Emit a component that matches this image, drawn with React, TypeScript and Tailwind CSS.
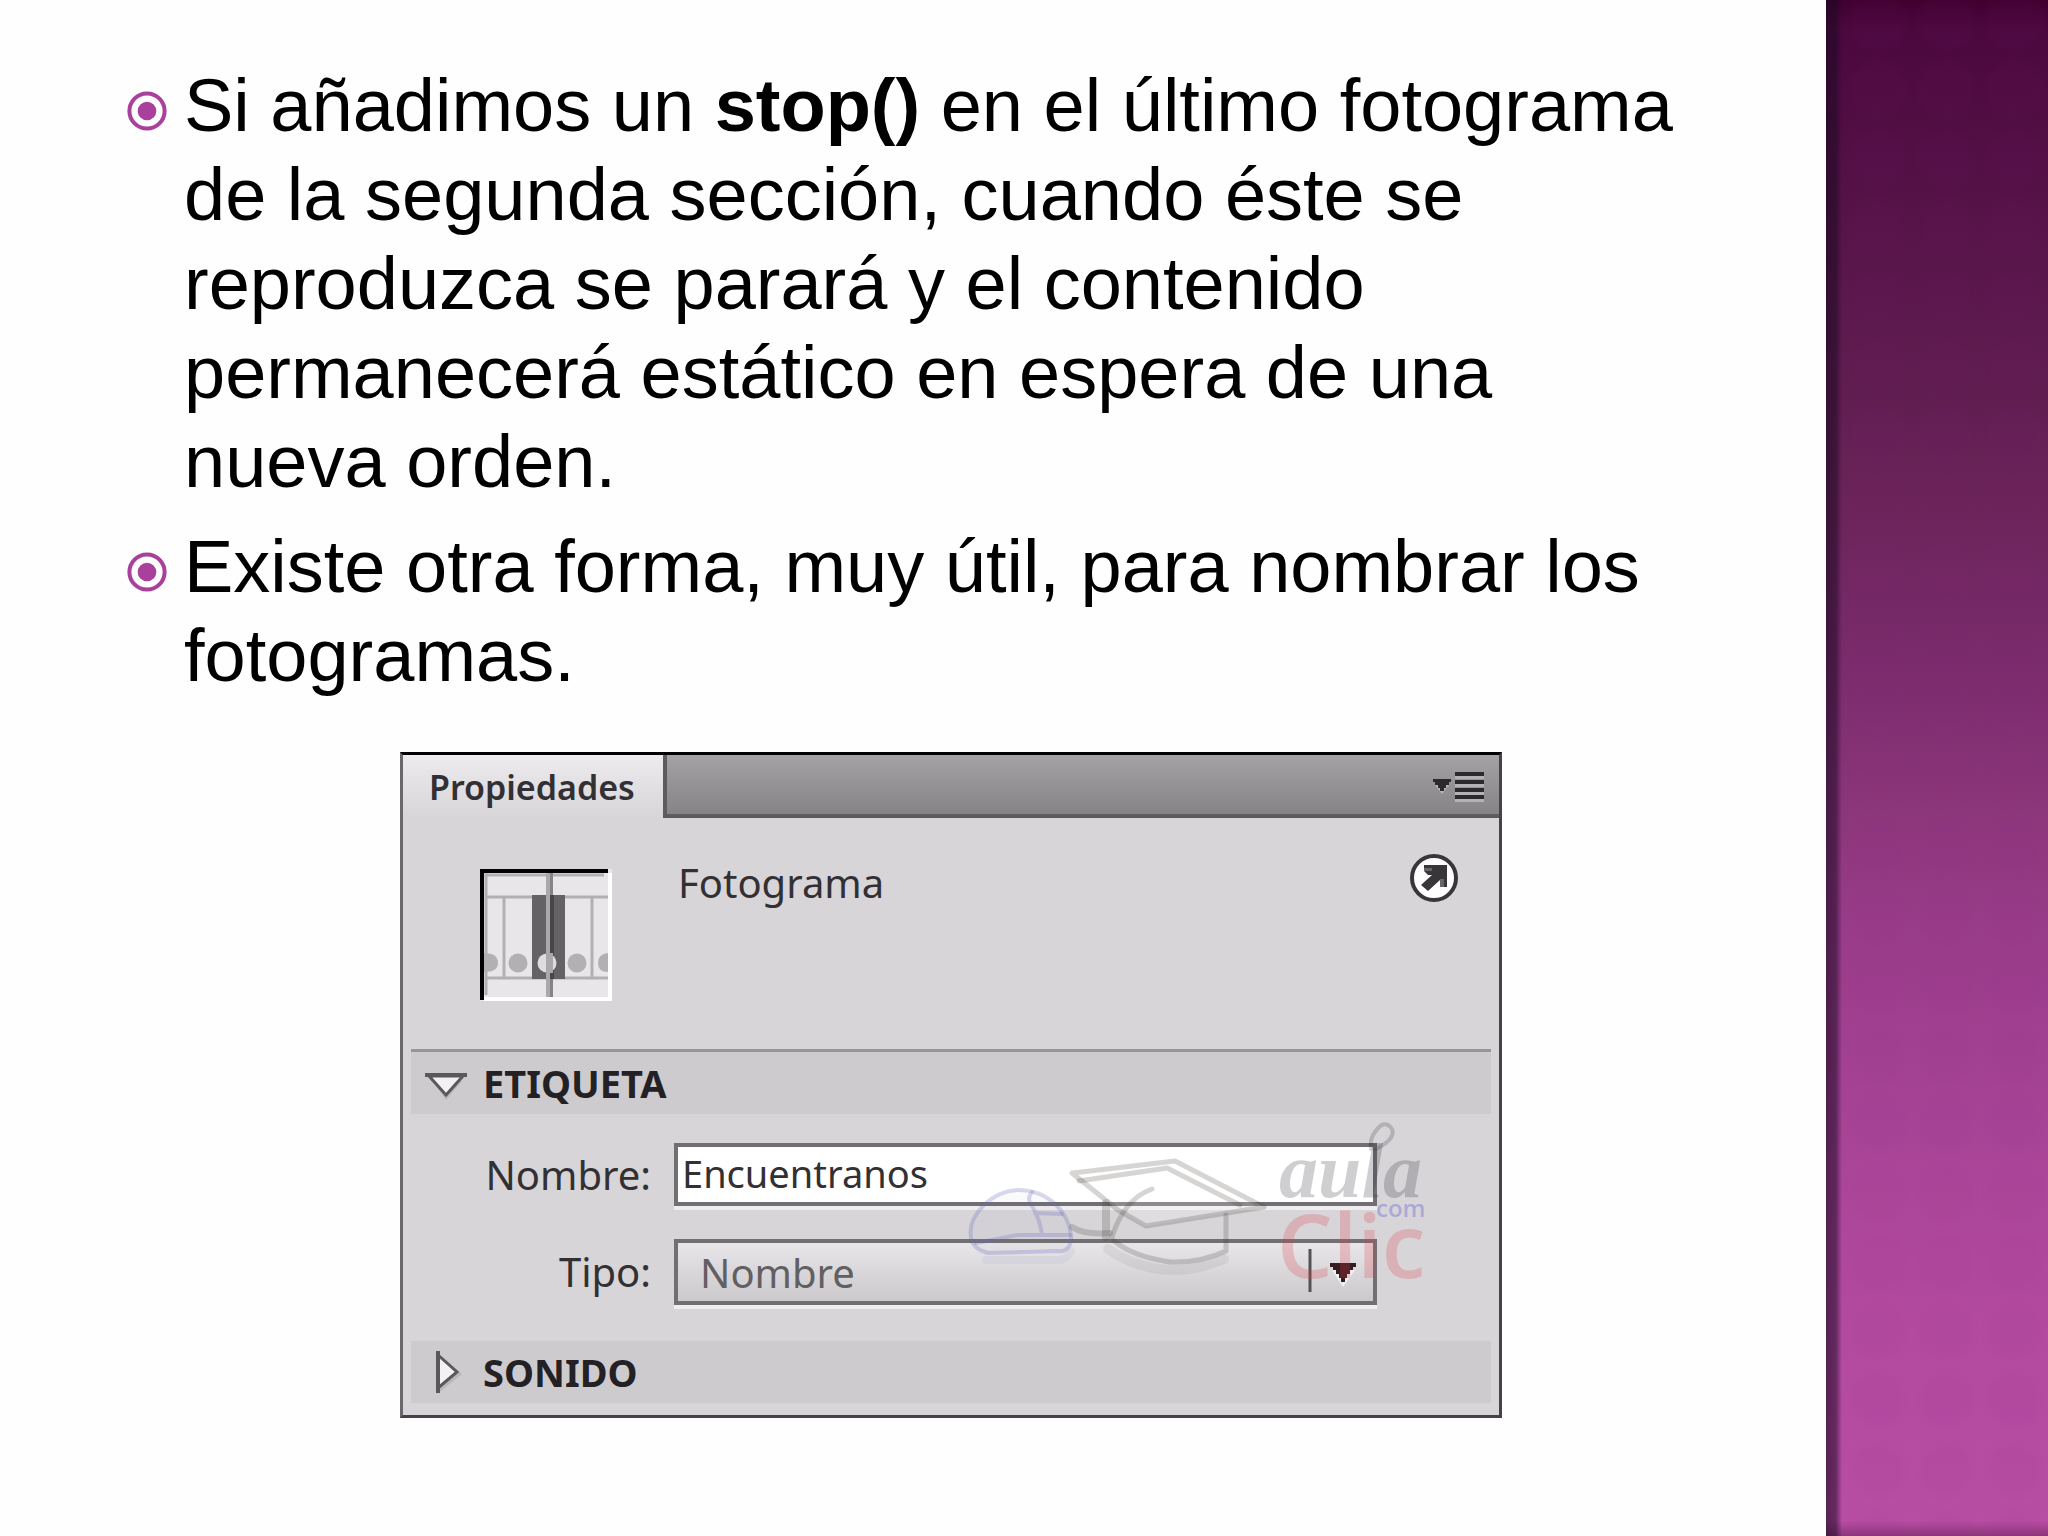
import React from "react";

const bullets = [
  <>
    Si añadimos un <strong>stop()</strong> en el último fotograma de la segunda
    sección, cuando éste se reproduzca se parará y el contenido permanecerá
    estático en espera de una nueva orden.
  </>,
  <>Existe otra forma, muy útil, para nombrar los fotogramas.</>,
];

const BulletIcon = () => (
  <svg viewBox="0 0 40 40" className="mt-[30px] h-10 w-10 shrink-0" aria-hidden="true">
    <circle cx="20" cy="20" r="17.6" fill="none" stroke="#a9409b" strokeWidth="4" />
    <circle cx="20" cy="20" r="9.3" fill="#a9409b" />
  </svg>
);

const MenuIcon = () => (
  <svg viewBox="0 0 52 32" className="mt-1 h-8 w-[52px]" aria-hidden="true">
    <path d="M2 14h14l-7 9z" fill="#b4b2b5" />
    <path d="M0 8h18v3h-2v3h-3v3h-2v3H7v-3H5v-3H2v-3H0z" fill="#2d2a2e" />
    {[1, 9, 17, 24].map((y) => (
      <g key={y}>
        <rect x="22" y={y} width="29" height="4" fill="#2d2a2e" />
        <rect x="22" y={y + 4} width="29" height="3" fill="#b4b2b5" />
      </g>
    ))}
  </svg>
);

const FrameThumb = () => (
  <svg viewBox="0 0 132 132" className="h-[132px] w-[132px] shrink-0" aria-hidden="true">
    <rect width="132" height="132" fill="#e8e6e9" />
    <path d="M6 6H124M6 28H128M6 109H128" stroke="#b2b0b3" strokeWidth="3" />
    <path d="M6 4V126M24 28V109M112 28V109" stroke="#b2b0b3" strokeWidth="3" />
    <path d="M4 84q14 0 14 10q0 9-14 9z" fill="#b2b0b3" />
    <circle cx="38" cy="94" r="9.5" fill="#b2b0b3" />
    <circle cx="97" cy="94" r="9.5" fill="#b2b0b3" />
    <path d="M128 84q-10 1-10 10q0 9 10 9z" fill="#b2b0b3" />
    <rect x="52" y="26" width="33" height="84" fill="#656266" />
    <rect x="70" y="26" width="4" height="84" fill="#48454a" />
    <circle cx="67" cy="94" r="9.5" fill="#dedcdf" />
    <rect x="66" y="4" width="4" height="124" fill="#aaa8ab" />
    <rect x="70" y="4" width="3" height="22" fill="#858386" />
    <rect x="70" y="84" width="3" height="20" fill="#aaa8ab" />
    <rect x="70" y="110" width="3" height="18" fill="#858386" />
    <path d="M128 4h4v128H4v-4h124z" fill="#fff" />
    <path d="M0 0h128v4H4v127H0z" fill="#000" />
  </svg>
);

const LaunchIcon = () => (
  <svg viewBox="0 0 50 50" className="h-[50px] w-[50px]" aria-hidden="true">
    <circle cx="25" cy="25" r="22" fill="#fff" stroke="#39363a" strokeWidth="4" />
    <path d="M15 12h23v22h-7v-7L19 38l-7-6 11-10h-4l-4-4z" fill="#39363a" />
    <path d="M15 15h8v3h-8zM31 26h4v8h-4z" fill="#69666a" />
  </svg>
);

const OpenTriangle = () => (
  <svg viewBox="0 0 42 28" className="mt-2 w-[42px]" aria-hidden="true">
    <path d="M9 10L21 27L37 8z" fill="#b9b7ba" />
    <path d="M4 3h34L21 22z" fill="#f3f1f4" stroke="#5b585c" strokeWidth="3" />
    <path d="M0 2h42" stroke="#5b585c" strokeWidth="4" />
  </svg>
);

const ClosedTriangle = () => (
  <svg viewBox="0 0 42 44" className="w-[42px]" aria-hidden="true">
    <path d="M12 4V44L37 24z" fill="#b9b7ba" />
    <path d="M13 5V38L32 22z" fill="#f3f1f4" stroke="#5b585c" strokeWidth="3" />
    <path d="M13 1V43" stroke="#5b585c" strokeWidth="4" />
  </svg>
);

const Watermark = () => (
  <svg
    viewBox="0 -40 480 230"
    className="pointer-events-none absolute right-[57px] bottom-[72px] h-[230px] w-[480px]"
    fill="none"
    strokeLinejoin="round"
    strokeLinecap="round"
    aria-hidden="true"
  >
    {/* mouse */}
    <g stroke="#6464be" strokeOpacity="0.25" strokeWidth="4">
      <path d="M9 85C5 62 30 38 56 37C86 37 106 58 109 82C110 94 104 99 96 98L26 100C15 97 10 92 9 85z" fill="#8080a0" fillOpacity="0.04" />
      <path d="M70 39Q64 46 70 53Q78 66 80 82M73 60L100 61M14 90L56 82L108 82" />
    </g>
    <path d="M24 107H98Q106 105 109 98" stroke="#9696c8" strokeOpacity="0.12" strokeWidth="8" />
    {/* cap */}
    <g stroke="#46413c" strokeOpacity="0.22">
      <path d="M110 74Q122 82 148 80" strokeWidth="6" />
      <path d="M144 50V84" strokeWidth="8" />
      <path d="M111 20L213 8L302 54L184 73L156 57L110 20z" strokeWidth="5" fill="#fff" fillOpacity="0.2" />
      <path d="M117 28L205 15L278 52M190 36Q162 46 150 84" strokeWidth="5" />
      <path d="M264 62V98Q238 110 208 109Q172 104 152 88" strokeWidth="5" />
    </g>
    <path d="M146 96Q200 132 262 106" stroke="#46413c" strokeOpacity="0.08" strokeWidth="10" />
    {/* wordmark */}
    <path d="M414-4Q434-14 430-24Q422-36 411-18Q408-12 409-4" stroke="#37323c" strokeOpacity="0.22" strokeWidth="4" />
    <text
      x="317"
      y="44"
      fontFamily="'Liberation Serif', serif"
      fontStyle="italic"
      fontWeight="bold"
      fontSize="78"
      fill="#37323c"
      fillOpacity="0.24"
    >
      aula
    </text>
    <g fontFamily="'Open Sans', sans-serif" fontWeight="600">
      <text x="315" y="125" fontSize="88" fill="#dc3c46" fillOpacity="0.24">
        Clic
      </text>
      <text x="414" y="64" fontSize="24" fill="#6464d2" fillOpacity="0.4">
        com
      </text>
    </g>
  </svg>
);

const PropertiesPanel = () => {
  return (
    <section className="relative mx-auto w-[1102px] max-w-full border-3 border-t-black border-r-[#464348] border-b-[#464348] border-l-[#6b686d] bg-[#d7d5d8] font-['Noto_Sans',sans-serif] text-[#333034]">
      <header className="flex h-[63px]">
        <h2 className="flex w-[260px] items-center bg-linear-to-b from-[#edebee] to-[#d7d5d8] pl-[26px] text-[34px] leading-none font-semibold">
          Propiedades
        </h2>
        <div className="flex flex-1 items-center justify-end border-b-4 border-l-4 border-b-[#5e5b5f] border-l-[#5e5b5f] bg-linear-to-b from-[#a4a2a5] to-[#868487] pr-[14px]">
          <button type="button" aria-label="Menú del panel">
            <MenuIcon />
          </button>
        </div>
      </header>

      <div className="mx-2 flex h-[234px] items-start border-b-3 border-[#979598] pt-[35px] pr-8 pl-[69px]">
        <div className="mt-4">
          <FrameThumb />
        </div>
        <p className="mt-[2px] ml-[66px] flex-1 text-[40px] leading-[56px]">Fotograma</p>
        <button type="button" className="rounded-full" aria-label="Abrir">
          <LaunchIcon />
        </button>
      </div>

      <h3 className="mx-2 bg-[#cdcbce] text-[38px] font-bold text-[#242125]">
        <button type="button" className="flex h-[62px] w-full items-center gap-4 pl-[14px]">
          <OpenTriangle />
          ETIQUETA
        </button>
      </h3>

      <div className="grid grid-cols-[248px_703px] gap-x-[23px] gap-y-[33px] pt-[29px] pb-[36px] text-[40px]">
        <label htmlFor="nombre" className="self-center text-right leading-[62px]">
          Nombre:
        </label>
        <input
          id="nombre"
          type="text"
          defaultValue="Encuentranos"
          className="h-[63px] w-full border-4 border-[#726f73] bg-white pb-1 pl-1 text-[38px] leading-none shadow-[0_4px_0_#efedf0] outline-none"
        />
        <label htmlFor="tipo" className="self-center text-right leading-[62px]">
          Tipo:
        </label>
        <div className="relative">
          <select
            id="tipo"
            className="h-[66px] w-full appearance-none border-4 border-[#726f73] bg-linear-to-b from-[#e8e6e9] via-[#d9d7da] to-[#cbc9cc] pb-[2px] pl-[22px] text-[#625f63] shadow-[0_4px_0_#efedf0] outline-none"
          >
            <option>Nombre</option>
          </select>
          <svg
            viewBox="0 0 50 46"
            className="pointer-events-none absolute top-[10px] right-[20px] h-[46px] w-[50px]"
            aria-hidden="true"
          >
            <path d="M3 0V43" stroke="#555256" strokeWidth="3" />
            <path d="M25 21h23l-12 17z" fill="#f0eef1" />
            <path d="M23 14h26v4h-3v3h-3v4h-3v4h-2v4h-4v-4h-2v-4h-3v-4h-3v-3h-3z" fill="#341c20" />
          </svg>
        </div>
      </div>

      <h3 className="mx-2 mb-3 bg-[#cdcbce] text-[38px] font-bold text-[#242125]">
        <button type="button" className="flex h-[62px] w-full items-center gap-4 pl-[14px]">
          <ClosedTriangle />
          SONIDO
        </button>
      </h3>

      <Watermark />
    </section>
  );
};

const App = () => {
  return (
    <div className="flex min-h-screen bg-[#fefefe]">
      <main className="flex-1 pt-[61px] pr-[51px] pb-16 pl-[127px]">
        <ul className="max-w-[1574px] font-['Liberation_Sans',Arial,sans-serif] text-[74px] leading-[89px] text-black">
          {bullets.map((bullet, index) => (
            <li key={index} className="mb-4 flex gap-[17px]">
              <BulletIcon />
              <p>{bullet}</p>
            </li>
          ))}
        </ul>
        <div className="pt-9">
          <PropertiesPanel />
        </div>
      </main>
      <aside className="w-[222px] shrink-0 bg-[linear-gradient(to_right,#18082099,#18082080_10px,transparent_16px),radial-gradient(circle,#8a20800c_22px,transparent_34px),linear-gradient(to_bottom,#40002f,#4b083e_2%,#5f1d50_25%,#6b2459_33%,#7a2b6c_43%,#8c367b_53%,#983b88_60%,#a84496_74%,#b24a9f_86%,#b84da4_99%,#8c367b)] bg-[length:100%_100%,68px_69px,100%_100%] bg-[position:0_0,18px_-14px,0_0]" />
    </div>
  );
};

export default App;
